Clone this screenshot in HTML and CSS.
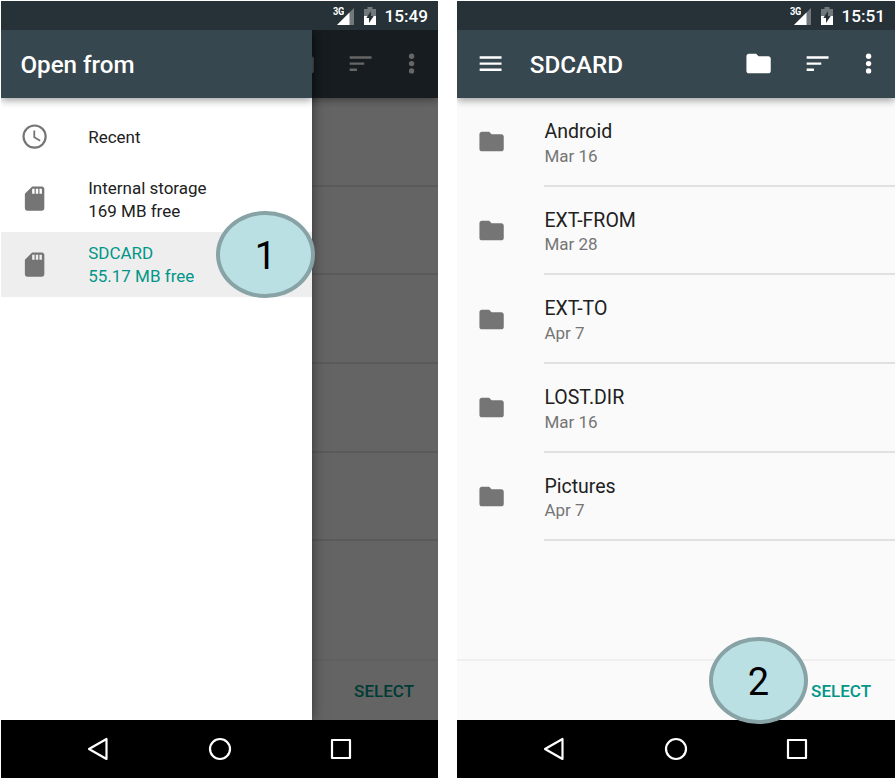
FILE: index.html
```
<!DOCTYPE html>
<html lang="en">
<head>
<meta charset="utf-8">
<title>Open from</title>
<link rel="stylesheet" href="styles.css">
</head>
<body>
<svg class="symbols" width="0" height="0" aria-hidden="true">
  <symbol id="folder" viewBox="0 0 24 24"><path d="M10 4H4c-1.100 0-2 .9-2 2v12c0 1.100.9 2 2 2h16c1.100 0 2-.9 2-2V8c0-1.100-.9-2-2-2h-8z"/></symbol>
  <symbol id="sort" viewBox="0 0 24 24"><path d="M3 18h6v-2H3zM3 6v2h18V6zm0 7h12v-2H3z"/></symbol>
  <symbol id="more" viewBox="0 0 24 24"><circle cx="12" cy="6" r="2.200"/><circle cx="12" cy="12" r="2.200"/><circle cx="12" cy="18" r="2.200"/></symbol>
  <symbol id="menu" viewBox="0 0 24 24"><path d="M3 18h18v-2H3zm0-5h18v-2H3zm0-7v2h18V6z"/></symbol>
  <symbol id="clock" viewBox="0 0 24 24"><circle cx="12" cy="12" r="9.100" fill="none" stroke="currentColor" stroke-width="1.800"/><path d="M12.500 7H11v6l5.200 3.100.8-1.200-4.500-2.700z"/></symbol>
  <symbol id="sd" viewBox="0 0 24 24"><path fill-rule="evenodd" d="M18 2h-8L4 8v12c0 1.100.9 2 2 2h12c1.100 0 2-.9 2-2V4c0-1.100-.9-2-2-2zM10 4v4h2V4zM13 4v4h2V4zM16 4v4h2V4z"/></symbol>
  <symbol id="signal" viewBox="0 0 17 17"><path d="M17 0V17H0z" opacity=".35"/><path d="M12.500 4.500V17H0z"/></symbol>
  <symbol id="battery" viewBox="0 0 12 18"><path d="M3.500 0h5v2H12v7H0V2h3.500z" opacity=".35"/><path d="M0 9h12v9H0z"/><path d="M7 4v5h2.700L5 16v-5H2.300z" fill="#263238"/></symbol>
</svg>
<main class="stage">
  <section class="phone">
    <header class="status"><span class="network">3G</span><svg class="signal"><use href="#signal"/></svg><svg class="battery"><use href="#battery"/></svg><time>15:49</time></header>
    <div class="screen">
      <div class="toolbar">
        <div class="actions"><svg class="icon"><use href="#folder"/></svg><svg class="icon"><use href="#sort"/></svg><svg class="icon"><use href="#more"/></svg></div>
      </div>
      <div class="files">
        <div class="file"><div class="info"></div></div>
        <div class="file"><div class="info"></div></div>
        <div class="file"><div class="info"></div></div>
        <div class="file"><div class="info"></div></div>
        <div class="file"><div class="info"></div></div>
      </div>
      <footer class="footer"><span>SELECT</span></footer>
      <div class="scrim"></div>
      <aside class="drawer">
        <div class="toolbar"><h1>Open from</h1></div>
        <nav class="roots">
          <div class="root recent"><svg class="icon"><use href="#clock"/></svg><p>Recent</p></div>
          <div class="root"><svg class="icon"><use href="#sd"/></svg><p>Internal storage<br>169 MB free</p></div>
          <div class="root selected"><svg class="icon"><use href="#sd"/></svg><p>SDCARD<br>55.17 MB free</p></div>
        </nav>
      </aside>
    </div>
    <nav class="navbar">
      <svg viewBox="0 0 24 24"><path d="M20.500 2v20L3 12z"/></svg>
      <svg viewBox="0 0 24 24"><circle cx="12" cy="12" r="10"/></svg>
      <svg viewBox="0 0 24 24"><rect x="3" y="3" width="18" height="18"/></svg>
    </nav>
    <b class="step one">1</b>
  </section>
  <section class="phone">
    <header class="status"><span class="network">3G</span><svg class="signal"><use href="#signal"/></svg><svg class="battery"><use href="#battery"/></svg><time>15:51</time></header>
    <div class="screen">
      <div class="toolbar">
        <svg class="icon menu"><use href="#menu"/></svg><h1>SDCARD</h1>
        <div class="actions"><svg class="icon"><use href="#folder"/></svg><svg class="icon"><use href="#sort"/></svg><svg class="icon"><use href="#more"/></svg></div>
      </div>
      <div class="files">
        <div class="file"><svg class="icon"><use href="#folder"/></svg><div class="info"><h2>Android</h2><p>Mar 16</p></div></div>
        <div class="file"><svg class="icon"><use href="#folder"/></svg><div class="info"><h2>EXT-FROM</h2><p>Mar 28</p></div></div>
        <div class="file"><svg class="icon"><use href="#folder"/></svg><div class="info"><h2>EXT-TO</h2><p>Apr 7</p></div></div>
        <div class="file"><svg class="icon"><use href="#folder"/></svg><div class="info"><h2>LOST.DIR</h2><p>Mar 16</p></div></div>
        <div class="file"><svg class="icon"><use href="#folder"/></svg><div class="info"><h2>Pictures</h2><p>Apr 7</p></div></div>
      </div>
      <footer class="footer"><span>SELECT</span></footer>
    </div>
    <nav class="navbar">
      <svg viewBox="0 0 24 24"><path d="M20.500 2v20L3 12z"/></svg>
      <svg viewBox="0 0 24 24"><circle cx="12" cy="12" r="10"/></svg>
      <svg viewBox="0 0 24 24"><rect x="3" y="3" width="18" height="18"/></svg>
    </nav>
    <b class="step two">2</b>
  </section>
</main>
</body>
</html>
```
FILE: styles.css
```
* { box-sizing: border-box; }
body { margin: 0; background: #fff; font-family: Roboto, sans-serif; overflow: hidden; }
h1, h2, p { margin: 0; }
.symbols { position: absolute; }
.stage { display: flex; gap: 19px; padding: 1px; height: 779px; }
.phone { position: relative; width: 437px; height: 777px; display: flex; flex-direction: column; flex: none; }
.phone + .phone { width: 438px; }
svg { fill: currentColor; flex: none; }
.icon { width: 29.2px; height: 29.2px; display: block; }

.status { height: 29px; background: #263238; color: #fff; display: flex; align-items: center; justify-content: flex-end; padding-right: 10px; }
.network { font-size: 11px; font-weight: 700; line-height: 10px; letter-spacing: -.5px; align-self: flex-start; margin: 6px -6px 0 0; transform: scaleX(.84); transform-origin: right; }
.signal { width: 17px; height: 17px; margin: 1px 10px 0 0; }
.battery { width: 12px; height: 18px; margin-right: 8px; }
.status time { font-size: 17.200px; font-weight: 500; line-height: 29px; padding-top: 1px; }

.screen { position: relative; flex: 1; min-height: 0; display: flex; flex-direction: column; background: #fafafa; overflow: hidden; }
.toolbar { position: relative; height: 68px; flex: none; display: flex; align-items: center; background: #37474f; color: #fff; padding: 0 12px 0 19.400px; box-shadow: 0 2px 8px rgba(0, 0, 0, .4); }
.toolbar h1 { font-size: 24.200px; line-height: 30px; font-weight: 500; padding-top: 2px; }
.menu + h1 { margin-left: 24.200px; }
.actions { display: flex; margin-left: auto; align-items: center; }
.actions .icon + .icon { margin-left: 29px; }
.actions .icon:last-child { margin-left: 22px; }

.files { flex: 1; min-height: 0; }
.file { height: 88.700px; display: flex; align-items: center; padding-left: 19.600px; color: #757575; }
.phone .file .icon { margin: -1px 38.700px 0 0; }
.info { flex: 1; height: 100%; border-bottom: 2px solid #e1e1e1; padding-top: 21px; }
.file .info:first-child { margin-left: 67px; }
.info h2 { color: #212121; font-size: 19.500px; line-height: 25.500px; font-weight: 400; }
.info p { font-size: 17px; line-height: 22.800px; }
.footer { height: 61px; border-top: 2px solid #f0f0f0; padding-right: 24px; display: flex; align-items: center; justify-content: flex-end; color: #009688; font-size: 17px; font-weight: 500; }

.scrim { position: absolute; inset: 0; background: rgba(0, 0, 0, .6); }
.drawer { position: absolute; inset: 0 auto 0 0; width: 311px; background: #fff; box-shadow: 0 0 12px rgba(0, 0, 0, .5); }
.roots { padding-top: 10px; }
.root { height: 65.500px; display: flex; align-items: center; gap: 38.700px; padding-left: 19.300px; color: #757575; }
.root.recent { height: 58px; }
.root p { color: #212121; font-size: 17px; line-height: 23px; padding-top: 2px; }
.root.recent p { padding-top: 1px; }
.root.selected { background: #eee; }
.root.selected p { color: #009688; }

.navbar { height: 58px; background: #000; color: #fff; display: flex; align-items: center; padding-left: 85px; gap: 97.500px; }
.navbar svg { width: 24px; height: 24px; fill: none; stroke: #fff; stroke-width: 2.200; stroke-linejoin: round; }

.step { position: absolute; width: 99px; height: 87px; border: 4px solid #88a3a6; border-radius: 50%; background: #bbe0e3; color: #000; display: flex; align-items: center; justify-content: center; padding-top: 2px; font: 400 38px/1 Roboto, sans-serif; }
.one { left: 215px; top: 210px; }
.two { left: 252px; top: 636px; }
```
